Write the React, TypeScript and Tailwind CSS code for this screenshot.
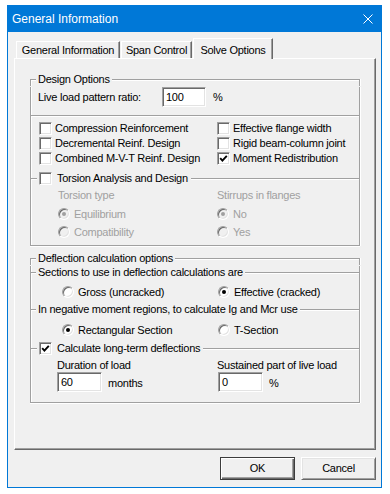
import React from 'react';

const sunken =
  'border border-t-[#a0a0a0] border-l-[#a0a0a0] border-r-white border-b-white shadow-[inset_1px_1px_0_#696969,inset_-1px_-1px_0_#e3e3e3]';

const CheckBox = ({ checked }: { checked?: boolean }) => (
  <div className={`w-[13px] h-[13px] shrink-0 bg-white flex items-center justify-center ${sunken}`}>
    {checked && (
      <svg width="9" height="9" viewBox="0 0 9 9">
        <path d="M1.2 4.2 L3.4 6.6 L7.8 1.8" fill="none" stroke="#000" strokeWidth="1.9" />
      </svg>
    )}
  </div>
);

const Radio = ({ on, disabled }: { on?: boolean; disabled?: boolean }) => (
  <div
    className={`w-[12px] h-[12px] shrink-0 rounded-full flex items-center justify-center ${sunken} ${
      disabled ? 'bg-[#f0f0f0]' : 'bg-white'
    }`}
  >
    {on && <div className={`w-[4px] h-[4px] rounded-full ${disabled ? 'bg-[#a0a0a0]' : 'bg-black'}`} />}
  </div>
);

const Line = () => <div className="flex-1 mt-[6px] h-[2px] border-t border-t-[#a0a0a0] border-b border-b-white" />;

// top edge of a group box, label sits on the line
const GroupTop = ({ label }: { label: string }) => (
  <div className="flex h-[13px]">
    <div className="w-[6px] mt-[6px] border-t border-l border-[#a0a0a0] shadow-[inset_1px_1px_0_#fff]" />
    <span className="px-[2px] leading-[13px]">{label}</span>
    <div className="flex-1 mt-[6px] border-t border-r border-[#a0a0a0] shadow-[inset_0_1px_0_#fff,1px_0_0_#fff]" />
  </div>
);

// nested group edge that shares the outer box's sides
const SubTop = ({ label }: { label: string }) => (
  <div className="flex h-[13px]">
    <div className="w-[5px] mt-[6px] h-[2px] border-t border-t-[#a0a0a0] border-b border-b-white" />
    <span className="px-[2px] leading-[13px]">{label}</span>
    <Line />
  </div>
);

const CheckTop = ({ label, checked }: { label: string; checked?: boolean }) => (
  <div className="flex h-[13px] items-start">
    <div className="w-[6px] mt-[6px] h-[2px] border-t border-t-[#a0a0a0] border-b border-b-white" />
    <div className="ml-[2px]">
      <CheckBox checked={checked} />
    </div>
    <span className="ml-[5px] pr-[3px] leading-[13px]">{label}</span>
    <Line />
  </div>
);

const groupBody = 'border-l border-r border-b border-[#a0a0a0] shadow-[inset_1px_0_0_#fff,1px_0_0_#fff,0_1px_0_#fff]';

const CheckRow = ({ label, checked }: { label: string; checked?: boolean }) => (
  <div className="h-[15px] flex items-center gap-[3px]">
    <CheckBox checked={checked} />
    <span>{label}</span>
  </div>
);

const RadioRow = ({ label, on, disabled }: { label: string; on?: boolean; disabled?: boolean }) => (
  <div className={`h-[18px] flex items-center gap-[4px] ${disabled ? 'text-[#a0a0a0]' : ''}`}>
    <Radio on={on} disabled={disabled} />
    <span>{label}</span>
  </div>
);

const Field = ({ value, w }: { value: string; w: string }) => (
  <div className={`${w} h-[20px] bg-white pl-[3px] flex items-center ${sunken}`}>{value}</div>
);

export default function App() {
  return (
    <div className="w-[390px] h-[494px] bg-white pt-[5px] pl-[7px] font-['Liberation_Sans',Arial,sans-serif] text-[11px] text-black">
      <div className="w-[375px] h-[483px] border border-[#0078d7] bg-[#f0f0f0] flex flex-col">
        <div className="h-[26px] bg-[#0078d7] flex items-center justify-between pl-[4px] pr-[8px] text-white text-[12px]">
          <span>General Information</span>
          <svg width="10" height="10" viewBox="0 0 10 10">
            <path d="M0.5 0.5 L9.5 9.5 M9.5 0.5 L0.5 9.5" stroke="#fff" strokeWidth="1" />
          </svg>
        </div>

        <div className="flex-1 pt-[6px] pl-[6px] pr-[5px] flex flex-col tracking-[-0.25px]">
          {/* tabs */}
          <div className="h-[20px] flex items-end">
            <div className="ml-[2px] w-[104px] h-[17px] border-t border-l border-white border-r border-r-[#696969] shadow-[inset_-1px_0_0_#a0a0a0] flex items-center justify-center">
              General Information
            </div>
            <div className="ml-[1px] w-[71px] h-[17px] border-t border-l border-white border-r border-r-[#696969] shadow-[inset_-1px_0_0_#a0a0a0] flex items-center justify-center">
              Span Control
            </div>
            <div className="relative z-10 ml-[1px] w-[80px] h-[21px] -mb-[1px] bg-[#f0f0f0] border-t border-l border-white border-r border-r-[#696969] shadow-[inset_-1px_0_0_#a0a0a0] flex items-start justify-center pt-[3px]">
              Solve Options
            </div>
          </div>

          {/* tab page */}
          <div className="w-[362px] h-[392px] border-t border-l border-white border-r border-b border-r-[#696969] border-b-[#696969] shadow-[inset_-1px_-1px_0_#a0a0a0] pt-[14px]">
            <div className="ml-[15px] w-[330px]">
              <GroupTop label="Design Options" />
              <div className={`${groupBody} pb-[4px]`}>
                <div className="mt-[1px] h-[20px] flex items-center pl-[7px]">
                  <span className="w-[124px]">Live load pattern ratio:</span>
                  <Field value="100" w="w-[44px]" />
                  <span className="ml-[7px]">%</span>
                </div>
                <div className="mt-[8px] h-[2px] border-t border-t-[#a0a0a0] border-b border-b-white" />
                <div className="mt-[4px] pl-[8px] grid grid-cols-[178px_1fr]">
                  <CheckRow label="Compression Reinforcement" />
                  <CheckRow label="Effective flange width" />
                  <CheckRow label="Decremental Reinf. Design" />
                  <CheckRow label="Rigid beam-column joint" />
                  <CheckRow label="Combined M-V-T Reinf. Design" />
                  <CheckRow label="Moment Redistribution" checked />
                </div>
                <div className="mt-[6px]">
                  <CheckTop label="Torsion Analysis and Design" />
                </div>
                <div className="mt-[3px] pl-[27px] grid grid-cols-[159px_1fr] text-[#a0a0a0]">
                  <div>
                    <div className="h-[15px] flex items-center">Torsion type</div>
                    <div className="mt-[2px]">
                      <RadioRow label="Equilibrium" on disabled />
                      <RadioRow label="Compatibility" disabled />
                    </div>
                  </div>
                  <div>
                    <div className="h-[15px] flex items-center">Stirrups in flanges</div>
                    <div className="mt-[2px]">
                      <RadioRow label="No" on disabled />
                      <RadioRow label="Yes" disabled />
                    </div>
                  </div>
                </div>
              </div>

              <div className="mt-[6px]">
                <GroupTop label="Deflection calculation options" />
                <div className={`${groupBody} pb-[10px]`}>
                  <div className="mt-[1px]">
                    <SubTop label="Sections to use in deflection calculations are" />
                  </div>
                  <div className="mt-[4px] pl-[31px] grid grid-cols-[156px_1fr]">
                    <RadioRow label="Gross (uncracked)" />
                    <RadioRow label="Effective (cracked)" on />
                  </div>
                  <div className="mt-[2px]">
                    <SubTop label="In negative moment regions, to calculate Ig and Mcr use" />
                  </div>
                  <div className="mt-[5px] pl-[31px] grid grid-cols-[156px_1fr]">
                    <RadioRow label="Rectangular Section" on />
                    <RadioRow label="T-Section" />
                  </div>
                  <div className="mt-[3px]">
                    <CheckTop label="Calculate long-term deflections" checked />
                  </div>
                  <div className="mt-[3px] pl-[26px] grid grid-cols-[160px_1fr]">
                    <div>
                      <div className="h-[14px] flex items-center">Duration of load</div>
                      <div className="h-[20px] flex items-center">
                        <Field value="60" w="w-[45px]" />
                        <span className="ml-[6px] pt-[3px]">months</span>
                      </div>
                    </div>
                    <div>
                      <div className="h-[14px] flex items-center">Sustained part of live load</div>
                      <div className="h-[20px] flex items-center pl-[1px]">
                        <Field value="0" w="w-[45px]" />
                        <span className="ml-[6px] pt-[3px]">%</span>
                      </div>
                    </div>
                  </div>
                </div>
              </div>
            </div>
          </div>

          {/* buttons */}
          <div className="mt-[7px] w-[362px] flex justify-end gap-[6px]">
            <div className="w-[75px] h-[23px] bg-[#f0f0f0] border border-[#3c3c3c] shadow-[inset_1px_1px_0_#fff,inset_-1px_-1px_0_#696969,inset_-2px_-2px_0_#a0a0a0] flex items-center justify-center">
              OK
            </div>
            <div className="w-[75px] h-[23px] bg-[#f0f0f0] border border-t-white border-l-white border-r-[#696969] border-b-[#696969] shadow-[inset_1px_1px_0_#e3e3e3,inset_-1px_-1px_0_#a0a0a0] flex items-center justify-center">
              Cancel
            </div>
          </div>
        </div>
      </div>
    </div>
  );
}
